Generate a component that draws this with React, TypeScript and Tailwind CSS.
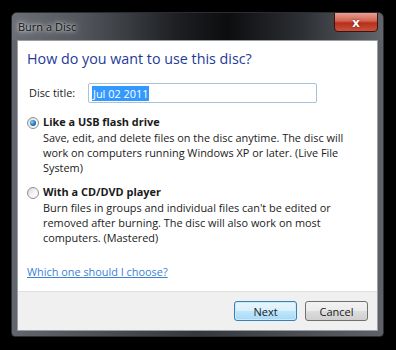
import React from 'react';

const font = { fontFamily: '"Open Sans", "Noto Sans", Arial, sans-serif' };

const Radio: React.FC<{ checked?: boolean }> = ({ checked }) => (
    <span className="relative w-[12px] h-[12px] rounded-full border border-[#8e8f8f] bg-gradient-to-br from-[#d6d6d6] via-[#f4f4f4] to-[#ffffff] flex items-center justify-center shrink-0">
        {checked && (
            <span className="w-[6px] h-[6px] rounded-full bg-[radial-gradient(circle_at_35%_35%,#7fd3ff,#1d6fb0_60%,#0d3f73)]"></span>
        )}
    </span>
);

interface OptionProps {
    title: string;
    lines: string[];
    checked?: boolean;
}

const Option: React.FC<OptionProps> = ({ title, lines, checked }) => (
    <div className="flex flex-col">
        <div className="flex items-center h-[15px]">
            <div className="w-[16px] flex justify-start">
                <Radio checked={checked} />
            </div>
            <span className="font-bold text-[#1a1a1a]">{title}</span>
        </div>
        <div className="pl-[16px] text-[#1a1a1a]">
            {lines.map((l) => (
                <div key={l} className="h-[15px] leading-[15px] whitespace-nowrap">{l}</div>
            ))}
        </div>
    </div>
);

export default function App() {
    return (
        <div className="w-[396px] h-[350px] bg-black pt-[12px] pl-[11px]" style={font}>
            <div className="w-[373px] h-[325px] rounded-t-[6px] rounded-b-[4px] border border-[#2b2d30] flex flex-col overflow-hidden bg-gradient-to-r from-[#63676d] via-[#34373b] to-[#5e6268]">
                {/* title bar */}
                <div className="h-[27px] flex items-start justify-between bg-[linear-gradient(90deg,#6c7076_0%,#54585e_18%,#1c1e21_45%,#0c0d0f_58%,#2c2f33_78%,#63676d_100%)]">
                    <span className="mt-[6px] ml-[6px] text-[11px] leading-[15px] text-[#111] [text-shadow:0_0_6px_rgba(255,255,255,0.9),0_0_3px_rgba(255,255,255,0.7)]">
                        Burn a Disc
                    </span>
                    <button className="mr-[5px] w-[44px] h-[20px] -mt-[1px] rounded-b-[4px] border border-[#3a1410] bg-[linear-gradient(180deg,#e8a093_0%,#d3614e_45%,#b5301c_55%,#c9513b_100%)] flex items-center justify-center text-white font-bold text-[13px] leading-none [text-shadow:0_0_2px_#5a1208]">
                        x
                    </button>
                </div>
                {/* body with side frames */}
                <div className="flex-1 px-[5px] pb-[5px] flex">
                    <div className="flex-1 flex flex-col bg-white border border-[#9aa0a6] text-[10.9px]">
                        <div className="flex-1 pl-[9px] pr-[10px] pt-[8px] flex flex-col">
                            <h1 className="text-[14.3px] leading-[20px] text-[#1e3a9a] whitespace-nowrap">
                                How do you want to use this disc?
                            </h1>
                            <div className="mt-[14px] flex items-center h-[20px]">
                                <span className="ml-[2px] w-[59px] text-[#1a1a1a]">Disc title:</span>
                                <div className="w-[229px] h-[20px] border border-[#a9c2dc] rounded-[2px] flex items-center px-[3px]">
                                    <span className="bg-[#3399ff] text-white leading-[15px] px-[1px]">Jul 02 2011</span>
                                </div>
                            </div>
                            <div className="mt-[12px]">
                                <Option
                                    checked
                                    title="Like a USB flash drive"
                                    lines={[
                                        'Save, edit, and delete files on the disc anytime. The disc will',
                                        'work on computers running Windows XP or later. (Live File',
                                        'System)',
                                    ]}
                                />
                            </div>
                            <div className="mt-[10px]">
                                <Option
                                    title="With a CD/DVD player"
                                    lines={[
                                        "Burn files in groups and individual files can't be edited or",
                                        'removed after burning. The disc will also work on most',
                                        'computers. (Mastered)',
                                    ]}
                                />
                            </div>
                            <a href="#" className="mt-[19px] leading-[15px] text-[#3a7fd6] underline w-fit">
                                Which one should I choose?
                            </a>
                        </div>
                        <div className="h-[39px] bg-[#f0f0f0] border-t border-[#dfdfdf] flex justify-end items-start pt-[9px] pr-[9px] gap-[8px]">
                            <button className="w-[63px] h-[20px] rounded-[3px] border border-[#3c7fb1] bg-[linear-gradient(180deg,#eaf6fd_0%,#d9f0fc_50%,#bee6fd_51%,#a7d9f5_100%)] shadow-[inset_0_0_0_1px_#c8ebfb] text-[#1a1a1a] text-[11px] leading-none">
                                Next
                            </button>
                            <button className="w-[63px] h-[20px] rounded-[3px] border border-[#707070] bg-[linear-gradient(180deg,#f2f2f2_0%,#ebebeb_50%,#dddddd_51%,#cfcfcf_100%)] text-[#1a1a1a] text-[11px] leading-none">
                                Cancel
                            </button>
                        </div>
                    </div>
                </div>
            </div>
        </div>
    );
}
